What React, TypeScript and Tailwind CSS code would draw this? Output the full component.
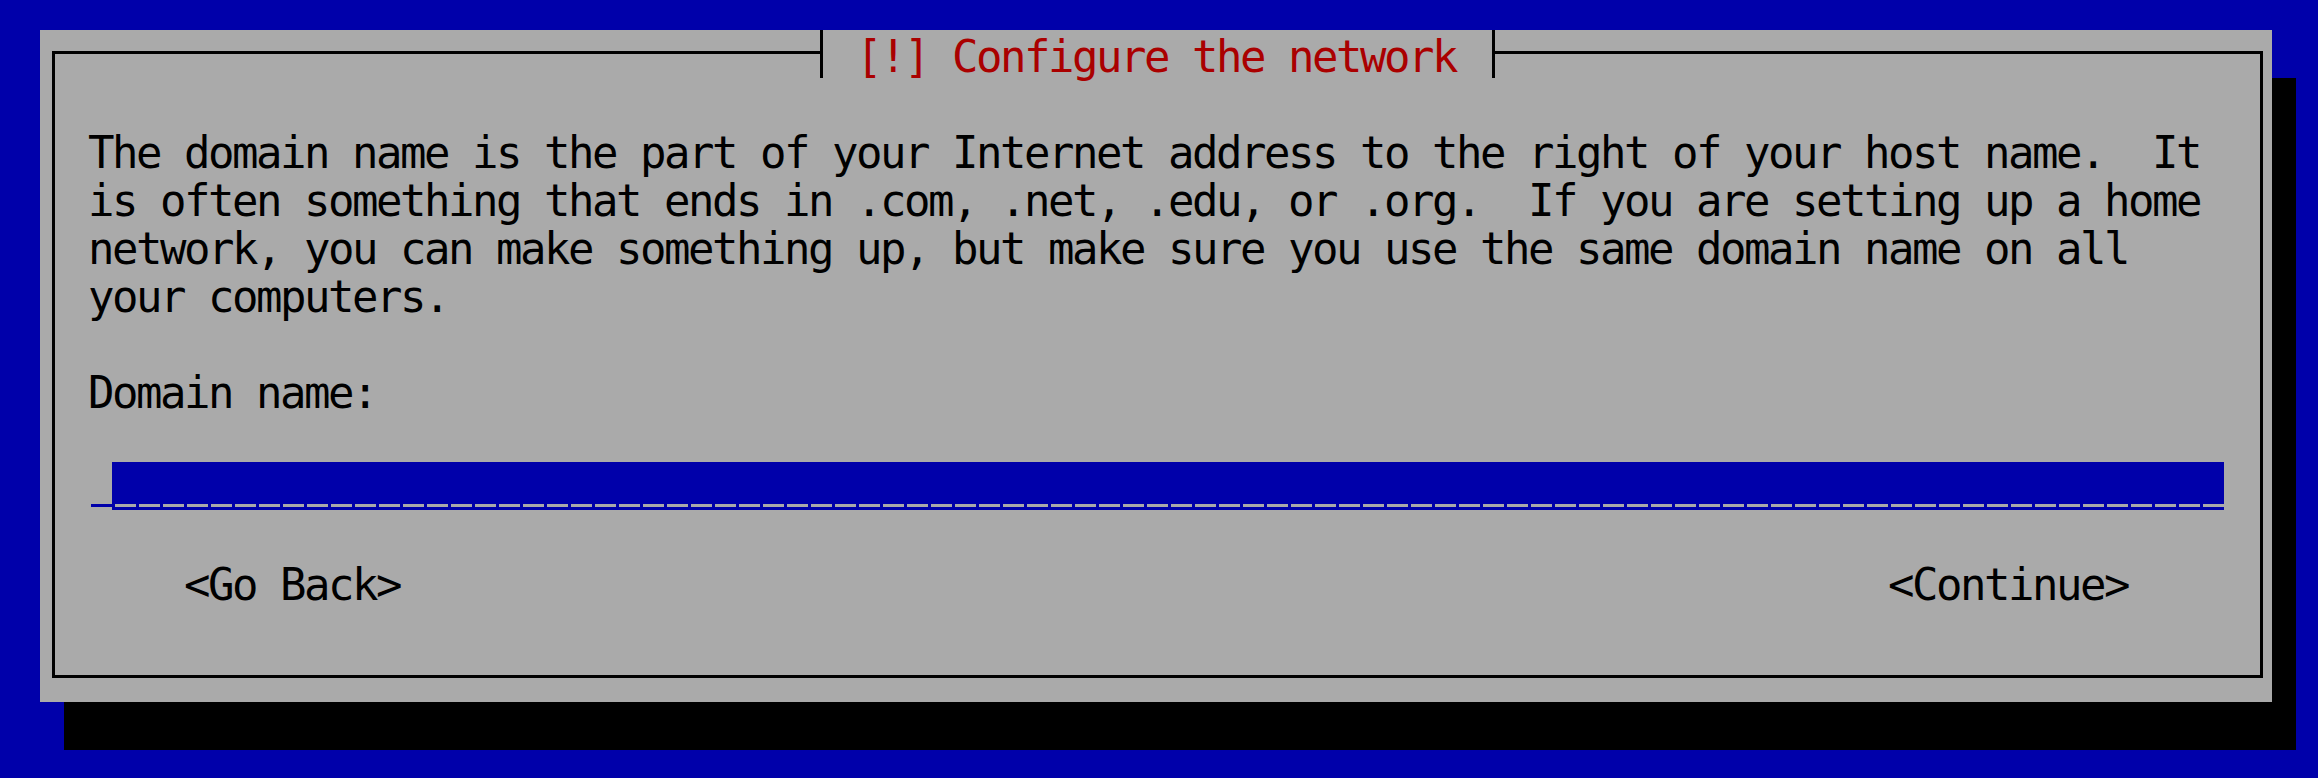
import React from 'react';

const paragraph = [
  'The domain name is the part of your Internet address to the right of your host name.  It',
  'is often something that ends in .com, .net, .edu, or .org.  If you are setting up a home',
  'network, you can make something up, but make sure you use the same domain name on all',
  'your computers.',
];

const FIELD_CELLS = 88;

const TextRow: React.FC<{ children: React.ReactNode; className?: string }> = ({ children, className }) => (
  <div className={`h-[48px] pt-[3px] leading-[48px] whitespace-pre ${className ?? ''}`}>{children}</div>
);

const Blank = () => <div className="h-[48px]" />;

export default function App() {
  return (
    <div className="w-[2318px] h-[778px] bg-[#0000aa] pl-[40px] pt-[30px] overflow-hidden font-['DejaVu_Sans_Mono','Liberation_Mono',monospace] text-[44px] tracking-[-2.49px] text-black">
      {/* dialog window, shadow is one cell right and one row down */}
      <div className="w-[2232px] h-[672px] bg-[#aaaaaa] shadow-[24px_48px_0_0_#000] pl-[12px] pr-[9px]">
        <div className="flex flex-col h-[648px]">
          {/* top border with title */}
          <div className="flex h-[48px] shrink-0">
            <div className="w-[756px] h-[27px] mt-[21px] border-l-[3px] border-t-[3px] border-black" />
            <div className="flex h-[48px]">
              <div className="flex w-[24px] h-full">
                <div className="w-[12px] h-[3px] mt-[21px] bg-black" />
                <div className="w-[3px] h-full bg-black" />
              </div>
              <div className="w-[648px] px-[24px] h-[48px] pt-[3px] leading-[48px] whitespace-pre text-[#aa0000]">
                [!] Configure the network
              </div>
              <div className="flex w-[24px] h-full">
                <div className="w-[12px]" />
                <div className="w-[3px] h-full bg-black" />
                <div className="flex-1 h-[3px] mt-[21px] bg-black" />
              </div>
            </div>
            <div className="flex-1 h-[27px] mt-[21px] border-r-[3px] border-t-[3px] border-black" />
          </div>

          {/* body */}
          <div className="flex-1 border-x-[3px] border-b-[3px] border-black pl-[33px] pt-[48px]">
            <div className="w-[2136px]">
              {paragraph.map((line, i) => (
                <TextRow key={i}>{line}</TextRow>
              ))}
              <Blank />
              <TextRow>Domain name:</TextRow>
              <Blank />

              {/* entry field */}
              <div className="flex h-[48px]">
                <div className="w-[24px] h-full flex items-end pb-[3px] pl-[3px]">
                  <div className="w-[21px] h-[3px] bg-[#0000aa]" />
                </div>
                <div className="flex h-full bg-[#0000aa]">
                  {Array.from({ length: FIELD_CELLS }).map((_, i) => (
                    <div key={i} className="w-[24px] h-full flex items-end pb-[3px] pl-[3px]">
                      <div className="w-[21px] h-[3px] bg-[#aaaaaa]" />
                    </div>
                  ))}
                </div>
              </div>

              <Blank />

              {/* buttons */}
              <TextRow className="flex justify-between px-[96px]">
                <span>&lt;Go Back&gt;</span>
                <span>&lt;Continue&gt;</span>
              </TextRow>
            </div>
          </div>
        </div>
      </div>
    </div>
  );
}
